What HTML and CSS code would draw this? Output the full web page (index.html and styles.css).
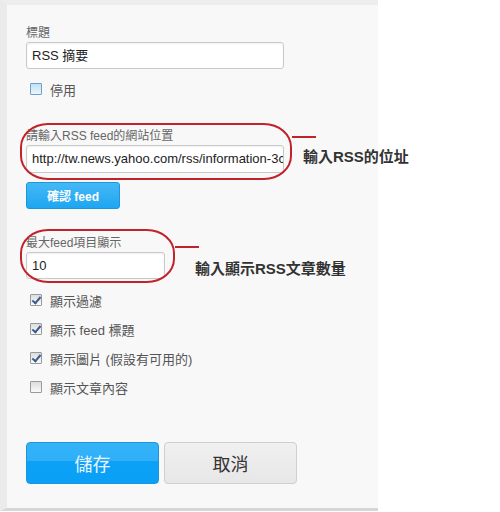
FILE: index.html
```html
<!DOCTYPE html>
<html lang="zh-Hant">
<head>
<meta charset="utf-8">
<title>RSS 摘要</title>
<link rel="stylesheet" href="styles.css">
</head>
<body>
<div class="panel">
  <div class="field f-title">
    <div class="lbl">標題</div>
    <div class="input wide">RSS 摘要</div>
  </div>
  <div class="check first"><span class="box hover"></span><span>停用</span></div>

  <div class="annot-row r1">
    <div class="circled c1">
      <div class="lbl">請輸入RSS feed的網站位置</div>
      <div class="input wide tall url">http://tw.news.yahoo.com/rss/information-3c</div>
    </div>
    <div class="note n1"><span class="line"></span><span class="note-text">輸入RSS的位址</span></div>
  </div>
  <button class="btn-feed">確認 feed</button>

  <div class="annot-row r2">
    <div class="circled c2">
      <div class="lbl">最大feed項目顯示</div>
      <div class="input narrow">10</div>
    </div>
    <div class="note n2"><span class="line"></span><span class="note-text">輸入顯示RSS文章數量</span></div>
  </div>

  <div class="checks">
    <div class="check"><span class="box on"></span><span>顯示過濾</span></div>
    <div class="check"><span class="box on"></span><span>顯示 feed 標題</span></div>
    <div class="check"><span class="box on"></span><span>顯示圖片 (假設有可用的)</span></div>
    <div class="check"><span class="box"></span><span>顯示文章內容</span></div>
  </div>

  <div class="actions">
    <button class="btn save">儲存</button>
    <button class="btn cancel">取消</button>
  </div>
</div>
</body>
</html>
```
FILE: styles.css
```css
* { box-sizing: border-box; }
html, body { margin: 0; padding: 0; background: #ffffff; }
body {
  font-family: "Liberation Sans", "Noto Sans CJK TC", Arial, sans-serif;
  color: #333;
}
.panel {
  width: 378px;
  background: #f8f8f8;
  border-left: 7px solid #ebebeb;
  border-top: 5px solid #ededed;
  border-bottom: 3px solid #d6d6d6;
  padding: 20px 0 24px 19px;
}
.lbl {
  font-size: 12px;
  line-height: 16px;
  height: 16px;
  color: #666;
  margin-bottom: 1px;
  white-space: nowrap;
}
.input {
  background: #fff;
  border: 1px solid #c9c9c9;
  border-radius: 3px;
  height: 27px;
  line-height: 25px;
  padding: 0 5px;
  font-size: 13px;
  color: #222;
  white-space: nowrap;
  overflow: hidden;
  box-shadow: inset 0 1px 2px rgba(0,0,0,0.06);
}
.url { font-size: 13px; }
.wide { width: 258px; }
.tall { height: 28px; line-height: 26px; }
.narrow { width: 139px; }

.check {
  display: flex;
  align-items: center;
  height: 20px;
  font-size: 13px;
  color: #555;
  padding-left: 4px;
}
.check.first { margin-top: 10px; }
.box {
  width: 12px;
  height: 12px;
  border: 1px solid #9a9a9a;
  border-radius: 1px;
  background: linear-gradient(#dcdcdc, #fbfbfb);
  margin-right: 8px;
  flex: none;
  position: relative;
}
.box.hover {
  border-color: #6f9fc6;
  background: linear-gradient(#bfe0f5, #eaf6fd);
}
.box.on::after {
  content: "";
  position: absolute;
  left: 3px;
  top: 0px;
  width: 3px;
  height: 7px;
  border-right: 2px solid #3c5a8c;
  border-bottom: 2px solid #3c5a8c;
  transform: rotate(40deg);
}

.annot-row {
  display: flex;
  align-items: flex-start;
}
.r1 { margin-top: 29px; }
.r2 { margin-top: 26px; }
.circled { position: relative; }
.circled::before {
  content: "";
  position: absolute;
  border: 2px solid #c1232c;
  border-radius: 28px / 24px;
  pointer-events: none;
}
.c1::before { left: -6px; right: -8px; top: -5px; bottom: -7px; }
.c2::before { left: -6px; right: -10px; top: -6px; bottom: -4px; }
.note {
  display: flex;
  flex-direction: column;
}
.n1 { margin-left: 8px; padding-top: 8px; }
.n2 { margin-left: 10px; padding-top: 11px; }
.line {
  display: block;
  width: 24px;
  height: 2px;
  background: #c1232c;
}
.note-text {
  font-size: 15px;
  line-height: 20px;
  font-weight: bold;
  color: #333;
  white-space: nowrap;
}
.n1 .note-text { margin-left: 11px; margin-top: 9px; }
.n2 .note-text { margin-left: 20px; margin-top: 11px; }

.btn-feed {
  display: block;
  margin-top: 9px;
  width: 94px;
  height: 27px;
  border: 1px solid #1d96da;
  border-radius: 3px;
  background: linear-gradient(#45b8f6, #1ea6f1);
  color: #fff;
  font-family: "Liberation Sans", "Noto Sans CJK TC", Arial, sans-serif;
  font-size: 12px;
  font-weight: bold;
  padding: 0;
}

.checks {
  margin-top: 11px;
  display: flex;
  flex-direction: column;
  gap: 9px;
}

.actions {
  display: flex;
  gap: 5px;
  margin-top: 45px;
}
.btn {
  width: 133px;
  height: 42px;
  border-radius: 4px;
  font-family: "Liberation Sans", "Noto Sans CJK TC", Arial, sans-serif;
  font-size: 18px;
  padding: 0;
}
.save {
  border: 1px solid #1b96dc;
  background: linear-gradient(#35b3f8 0%, #2eaff8 45%, #0ca1f7 46%, #0aa0f6 100%);
  color: #eaf6ff;
}
.cancel {
  border: 1px solid #cfcfcf;
  background: linear-gradient(#f0f0f0, #e7e7e7);
  color: #333;
}
```
